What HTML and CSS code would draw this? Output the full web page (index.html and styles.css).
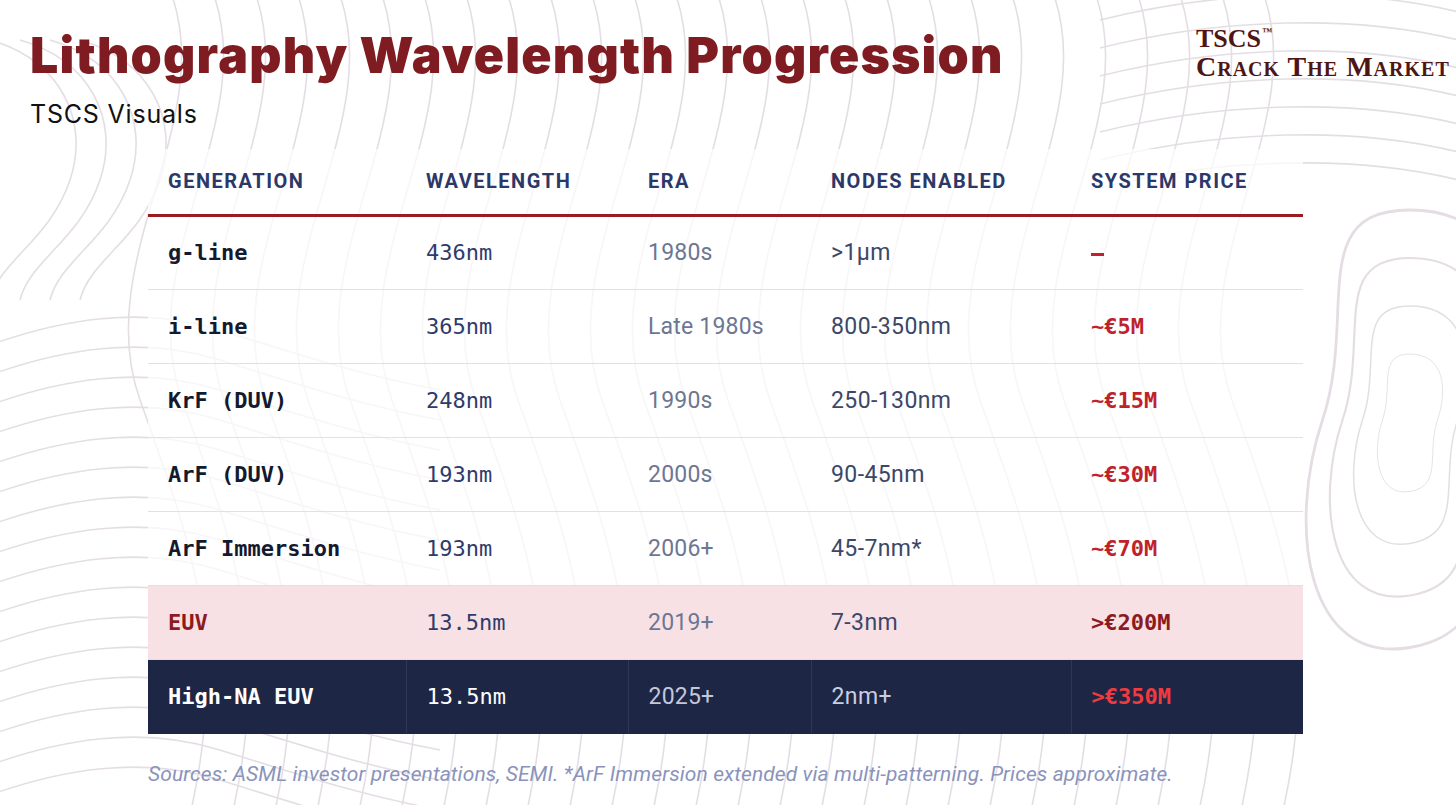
FILE: index.html
```html
<!DOCTYPE html>
<html lang="en">
<head>
<meta charset="utf-8">
<title>Lithography Wavelength Progression</title>
<link rel="stylesheet" href="styles.css">
</head>
<body>
<div class="page">
  <svg class="contours" width="1456" height="805" viewBox="0 0 1456 805" aria-hidden="true">
    <defs>
      <path id="vw" d="M0,-10 C50,120 -80,260 -30,400 C20,540 60,640 20,815"/>
      <path id="hw" d="M-10,0 C60,-25 140,-40 220,-15 C300,10 360,30 440,45"/>
      <path id="tw" d="M1100,20 C1220,-10 1360,-15 1470,15"/>
      <path id="blob" d="M0,-120 C60,-120 70,-60 50,0 C30,60 60,120 0,130 C-60,140 -70,60 -50,0 C-30,-60 -60,-120 0,-120 Z"/>
      <path id="tl" d="M-10,40 C60,60 90,120 70,180 C50,240 0,260 -10,300"/>
    </defs>
    <g class="lines">
      <use href="#vw" x="170"/><use href="#vw" x="212"/><use href="#vw" x="254"/><use href="#vw" x="296"/>
      <use href="#vw" x="338"/><use href="#vw" x="380"/><use href="#vw" x="422"/><use href="#vw" x="464"/>
      <use href="#vw" x="506"/><use href="#vw" x="548"/><use href="#vw" x="590"/><use href="#vw" x="632"/>
      <use href="#vw" x="674"/><use href="#vw" x="716"/><use href="#vw" x="758"/><use href="#vw" x="800"/>
      <use href="#vw" x="842"/><use href="#vw" x="884"/><use href="#vw" x="926"/><use href="#vw" x="968"/>
      <use href="#vw" x="1010"/><use href="#vw" x="1052"/><use href="#vw" x="1094"/><use href="#vw" x="1136"/>
      <use href="#vw" x="1178"/><use href="#vw" x="1220"/><use href="#vw" x="1262"/>
      <use href="#hw" y="345"/><use href="#hw" y="375"/><use href="#hw" y="405"/><use href="#hw" y="435"/>
      <use href="#hw" y="465"/><use href="#hw" y="495"/><use href="#hw" y="525"/><use href="#hw" y="555"/>
      <use href="#hw" y="585"/><use href="#hw" y="615"/><use href="#hw" y="645"/><use href="#hw" y="675"/>
      <use href="#hw" y="705"/><use href="#hw" y="735"/><use href="#hw" y="765"/><use href="#hw" y="795"/>
      <use href="#tw" y="0"/><use href="#tw" y="28"/><use href="#tw" y="56"/><use href="#tw" y="84"/>
      <use href="#tw" y="112"/><use href="#tw" y="140"/><use href="#tw" y="168"/>
      <use href="#tl" x="0"/><use href="#tl" x="30"/><use href="#tl" x="60"/><use href="#tl" x="90"/>
      <use href="#blob" transform="translate(1410,420) scale(0.55)"/>
      <use href="#blob" transform="translate(1410,420) scale(0.95)"/>
      <use href="#blob" transform="translate(1410,420) scale(1.35)"/>
      <use href="#blob" transform="translate(1410,420) scale(1.75)"/>
    </g>
  </svg>

  <div class="content">
    <header class="top">
      <div class="titles">
        <h1 class="title">Lithography Wavelength Progression</h1>
        <p class="subtitle">TSCS Visuals</p>
      </div>
      <div class="logo">
        <div class="logo-mark">TSCS<span class="tm">™</span></div>
        <div class="logo-line">Crack The Market</div>
      </div>
    </header>

    <table class="grid">
      <colgroup>
        <col class="c1"><col class="c2"><col class="c3"><col class="c4"><col class="c5">
      </colgroup>
      <thead>
        <tr>
          <th>Generation</th>
          <th>Wavelength</th>
          <th>Era</th>
          <th>Nodes Enabled</th>
          <th>System Price</th>
        </tr>
      </thead>
      <tbody>
        <tr>
          <td class="gen">g-line</td><td class="wl">436nm</td><td class="era">1980s</td><td class="nodes">&gt;1µm</td><td class="price"><span class="dash"></span></td>
        </tr>
        <tr>
          <td class="gen">i-line</td><td class="wl">365nm</td><td class="era">Late 1980s</td><td class="nodes">800-350nm</td><td class="price">~€5M</td>
        </tr>
        <tr>
          <td class="gen">KrF (DUV)</td><td class="wl">248nm</td><td class="era">1990s</td><td class="nodes">250-130nm</td><td class="price">~€15M</td>
        </tr>
        <tr>
          <td class="gen">ArF (DUV)</td><td class="wl">193nm</td><td class="era">2000s</td><td class="nodes">90-45nm</td><td class="price">~€30M</td>
        </tr>
        <tr>
          <td class="gen">ArF Immersion</td><td class="wl">193nm</td><td class="era">2006+</td><td class="nodes">45-7nm*</td><td class="price">~€70M</td>
        </tr>
        <tr class="euv">
          <td class="gen">EUV</td><td class="wl">13.5nm</td><td class="era">2019+</td><td class="nodes">7-3nm</td><td class="price">&gt;€200M</td>
        </tr>
        <tr class="highna">
          <td class="gen">High-NA EUV</td><td class="wl">13.5nm</td><td class="era">2025+</td><td class="nodes">2nm+</td><td class="price">&gt;€350M</td>
        </tr>
      </tbody>
    </table>

    <p class="sources">Sources: ASML investor presentations, SEMI. *ArF Immersion extended via multi-patterning. Prices approximate.</p>
  </div>
</div>
</body>
</html>
```

FILE: styles.css
```css
* { box-sizing: border-box; }

html, body {
  margin: 0;
  padding: 0;
  background: #ffffff;
}

body {
  font-family: "Roboto", "Noto Sans", sans-serif;
  width: 1456px;
  height: 805px;
  overflow: hidden;
}

.page {
  position: relative;
  width: 1456px;
  height: 805px;
  overflow: hidden;
  background: #ffffff;
}

.contours {
  position: absolute;
  left: 0;
  top: 0;
  z-index: 0;
}

.lines use {
  fill: none;
  stroke: #e4dee4;
  stroke-width: 1.6;
}

.content {
  position: relative;
  z-index: 1;
  display: flex;
  flex-direction: column;
}

.top {
  display: flex;
  justify-content: space-between;
  align-items: flex-start;
  padding: 25px 8px 0 30px;
  height: 149px;
}

.title {
  margin: 0;
  font-family: "Inter", "Noto Sans", sans-serif;
  font-weight: 900;
  font-size: 50px;
  line-height: 60px;
  color: #7e1c21;
  letter-spacing: 1.2px;
}

.subtitle {
  margin: 14px 0 0 0;
  font-family: "Inter", "Noto Sans", sans-serif;
  font-size: 25px;
  line-height: 30px;
  color: #111111;
  letter-spacing: 0.8px;
}

.logo {
  margin-top: -6px;
  font-family: "Liberation Serif", "DejaVu Serif", serif;
  color: #4f1513;
  font-weight: 700;
  width: 252px;
}

.logo-mark {
  font-size: 26px;
  line-height: 26px;
}

.tm {
  font-size: 10px;
  vertical-align: 12px;
  margin-left: 1px;
}

.logo-line {
  font-size: 28px;
  line-height: 30px;
  font-variant: small-caps;
  letter-spacing: 1px;
  white-space: nowrap;
}

.grid {
  margin-left: 148px;
  width: 1155px;
  border-collapse: collapse;
  table-layout: fixed;
  background: rgba(255, 255, 255, 0.72);
}

.c1 { width: 258px; }
.c2 { width: 222px; }
.c3 { width: 183px; }
.c4 { width: 260px; }
.c5 { width: 232px; }

.grid th {
  height: 66px;
  padding: 0 20px;
  text-align: left;
  font-family: "Roboto", "Noto Sans", sans-serif;
  font-weight: 700;
  font-size: 20px;
  letter-spacing: 1.5px;
  text-transform: uppercase;
  color: #2c3868;
  border-bottom: 3px solid #9b1b22;
  vertical-align: middle;
}

.grid td {
  height: 74px;
  padding: 0 20px;
  border-bottom: 1px solid #e0e0ec;
  vertical-align: middle;
  white-space: nowrap;
}

.gen {
  font-family: "DejaVu Sans Mono", "Liberation Mono", monospace;
  font-weight: 700;
  font-size: 22px;
  color: #141a2e;
}

.wl {
  font-family: "DejaVu Sans Mono", "Liberation Mono", monospace;
  font-size: 22px;
  color: #2f3b6b;
}

.era {
  font-family: "Roboto", "Noto Sans", sans-serif;
  font-size: 23px;
  letter-spacing: 0.2px;
  color: #6c7794;
}

.nodes {
  font-family: "Roboto", "Noto Sans", sans-serif;
  font-size: 23px;
  letter-spacing: 0.4px;
  color: #3c4768;
}

.price {
  font-family: "DejaVu Sans Mono", "Liberation Mono", monospace;
  font-weight: 700;
  font-size: 22px;
  color: #c0222c;
}

.dash {
  display: inline-block;
  width: 13px;
  height: 3px;
  background: #c0222c;
  vertical-align: middle;
}

.euv td {
  background: #f7e1e5;
}

.euv .gen { color: #8c1a1f; }
.euv .price { color: #8c1a1f; }

.highna td {
  background: #1e2645;
  border-bottom: 1px solid #1e2645;
  border-left: 1px solid #2e3757;
}

.highna td:first-child { border-left: none; }

.highna .gen { color: #ffffff; }
.highna .wl { color: #ffffff; }
.highna .era { color: #c2c8dc; }
.highna .nodes { color: #c9cee0; }
.highna .price { color: #ef3b40; }

.sources {
  margin: 28px 0 0 148px;
  font-family: "Roboto", "Noto Sans", sans-serif;
  font-style: italic;
  font-size: 21px;
  letter-spacing: 0.1px;
  color: #8a93bb;
}
```
